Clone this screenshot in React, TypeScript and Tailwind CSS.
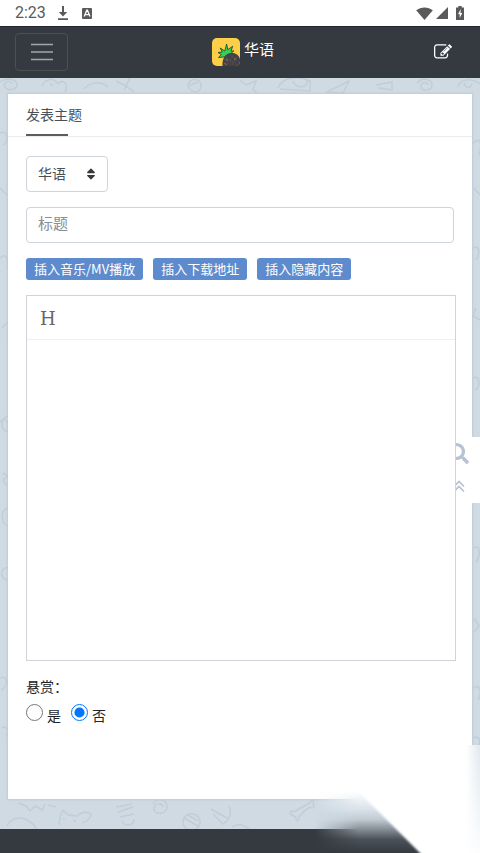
import React from 'react';
import { FaSearch, FaSort } from 'react-icons/fa';

interface InsertItem {
  key: string;
  label: string;
}

const insertItems: InsertItem[] = [
  { key: 'media', label: '插入音乐/MV播放' },
  { key: 'download', label: '插入下载地址' },
  { key: 'hidden', label: '插入隐藏内容' },
];

const StatusBar: React.FC = () => {
  return (
    <div className="flex h-[26px] items-center justify-between bg-white pl-[15px] pr-4 text-[#5a5a5a]">
      <div className="flex items-center">
        <span className="w-[42px] text-base leading-6">2:23</span>
        <svg width="12" height="14" viewBox="0 0 12 14" fill="currentColor">
          <path d="M5 0h2v6h3.2L6 10.5 1.8 6H5zM1 12.3h10V14H1z" />
        </svg>
        <svg className="ml-[13px]" width="10" height="11" viewBox="0 0 10 11">
          <rect width="10" height="11" rx="1" fill="currentColor" />
          <path d="M2.2 8.6 4.8 2.2h.6L8 8.6M3.2 6.6h3.8" fill="none" stroke="#fff" strokeWidth="1.3" />
        </svg>
      </div>
      <div className="flex items-center">
        <svg width="17" height="13" viewBox="0 0 18 14" fill="currentColor">
          <path d="M0 3.6C5 -.6 13 -.6 18 3.6L9 14z" />
        </svg>
        <svg className="ml-[3px]" width="12" height="12" viewBox="0 0 13 13" fill="currentColor">
          <path d="M13 0v13H0z" />
        </svg>
        <svg className="ml-2" width="8" height="14" viewBox="0 0 8 14">
          <path d="M2.3 0h3.4v1.4H8V14H0V1.4h2.3z" fill="currentColor" />
          <path d="M4.8 3 2 8.2h1.7V12l2.6-5H4.5z" fill="#fff" />
        </svg>
      </div>
    </div>
  );
};

const Logo: React.FC = () => {
  return (
    <svg width="28" height="28" viewBox="0 0 28 28">
      <rect width="28" height="28" rx="5" fill="#fdcf48" />
      <path
        d="M12 19 6.500 19.500l2.700-3L6 14.500l4.200-.5-2-4 4.600 3L14.600 6l1.200 5.700 4.900-3.500-1.700 5 2.900-.4-3.800 3.500z"
        fill="#35d05a"
        stroke="#1d4020"
        strokeWidth=".8"
      />
      <path d="M10.500 28C10 20 14 14.500 20 15c4 0 7.500 2.500 8 6.500v2c-.5 2.700-2 4.500-5 4.500z" fill="#434145" />
      <path d="M12.500 22.500l3-5M15.500 26l6-9.500M20 27l5-8M14 19l8 6M18 16.500l7 6" stroke="#5b585a" strokeWidth=".6" />
      <path d="M14 21.500l2 .8M22 21.500l1.500-1M12.500 25.500l2 1" stroke="#b9793e" strokeWidth="1" />
    </svg>
  );
};

const Navbar: React.FC = () => {
  return (
    <nav className="grid h-[52px] grid-cols-[1fr_auto_1fr] items-center border-t border-[#24282d] bg-[#343a40] px-[15px] pb-[2px]">
      <button
        type="button"
        aria-label="菜单"
        className="flex h-[38px] w-[53px] items-center justify-center rounded border border-[#4b5053]"
      >
        <svg width="24" height="18" viewBox="0 0 24 18" stroke="#a3a6a9" strokeWidth="1.7">
          <path d="M1 1.500h22M1 9h22M1 16.500h22" />
        </svg>
      </button>
      <a href="#" className="flex items-center gap-1 pl-[6px] text-[15px] leading-5 text-white">
        <Logo />
        <span className="pb-1">华语</span>
      </a>
      <a href="#" aria-label="发帖" className="mr-[13px] justify-self-end text-white">
        <svg width="18" height="18" viewBox="0 0 1792 1792" fill="currentColor">
          <path d="M888 1184l116-116-152-152-116 116v56h96v96h56zm440-720q-16-16-33 1l-350 350q-17 17-1 33t33-1l350-350q17-17 1-33zm80 594v190q0 119-84.5 203.5t-203.5 84.5h-832q-119 0-203.5-84.5t-84.5-203.5v-832q0-119 84.5-203.5t203.5-84.5h832q63 0 117 25 15 7 18 23 3 17-9 29l-49 49q-14 14-32 8-23-6-45-6h-832q-66 0-113 47t-47 113v832q0 66 47 113t113 47h832q66 0 113-47t47-113v-126q0-13 9-22l64-64q15-15 35-7t20 29zm-96-738l288 288-672 672h-288v-288zm444 132l-92 92-288-288 92-92q28-28 68-28t68 28l152 152q28 28 28 68t-28 68z" />
        </svg>
      </a>
    </nav>
  );
};

// Faint doodle wallpaper behind the card
const Doodles: React.FC = () => {
  return (
    <svg className="absolute inset-0 h-full w-full" fill="none" stroke="#c2cdd7" strokeWidth="1.5">
      <path d="M0 4c6-5 16-3 17 2s-9 8-12 3 5-8 7-3M42 8c2-7 12-9 16-2 5-6 11 0 7 8M50 5l3 3M84 11c8-9 18-7 24-2M116 3l10 5 8 6M130 0l-6 12M188 8c0-9 14-8 13 0s-9 8-13 0l10-4M240 2l6 5 10-4-3 8 5 6M278 10c3-9 18-14 32-7v10l-30-2M293 3c2 8 16 8 14-1M327 14l22-11-6 12zM376 7l16-3v8l-14-2M417 5c5-6 15-4 15 2s-10 7-11 2 6-6 7-2M458 9c2-9 14-9 22-3M464 5c2 6 6 6 8 1" />
      <path d="M0 344c5-6 9 0 8 8M8 338c-8 2-8 14 0 16M3 395l5 3-5 4 4 6M8 430c-8 2-7 16 0 18M8 490c-7-2-9 10-1 12M0 55c8-4 9 9 3 12M0 110l8 8M0 180c7-7 9 3 7 11M2 250l6-6v18M0 600c9-4 8 9 1 12M2 650c5-3 8 4 4 8" />
      <svg x="100%" overflow="visible">
        <path d="M-7 65c8-8 9 3 6 12M-6 110l6 7M-7 170c7-4 7 7 3 12M-4 230l-3 8 7 4M-7 300c7-4 8 9 2 12M-6 470c6-4 7 8 2 14M-6 540l5 8-5 6M-6 610c6-6 8 6 4 12M-7 660c9-4 8 8 2 10" />
      </svg>
      <svg y="100%" overflow="visible">
        <path d="M7-33c4-8 13-10 20-6s8 6 9 9M18-56l8 3 4 5 5-5 7 4 3-6M48-54l8 2M59-34c0-7 2-11 4-15l5 5 9 1c4-4 9-5 14-2-1 6-5 8-9 9M63-40h2M73-38h3M116-52l16-3M118-47l15-5M120-42l14-3M122-38c2 6 12 5 12-2M153-55c4-7 14-5 14 3s-13 8-13 2 8-7 9-2M183-37c0-11 17-11 17 0s-17 10-17 0M184-41l14 8M188-44l10 6M213-45l10 10c7-4 9-12 6-18M211-50l16 9M232-32c6-4 13-2 17 2M293-43c-5-3-2-7 1-4 6-4 12-7 16-9 1-4 5-3 3 1 3 2 0 5-3 3-5 3-8 6-11 10 0 5-4 5-3 0-2-1-3-1-3-1" transform="translate(0 30)" />
      </svg>
    </svg>
  );
};

const SideTools: React.FC = () => {
  return (
    <div className="absolute right-0 top-[359px] flex h-[66px] w-6 flex-col items-start overflow-hidden bg-white text-[#b7c3d1]">
      <button type="button" aria-label="搜索" className="-ml-2 flex h-[33px] items-center">
        <FaSearch size={21} />
      </button>
      <button type="button" aria-label="返回顶部" className="-ml-1 flex h-[33px] items-center">
        <svg width="14" height="14" viewBox="0 0 14 14" fill="none" stroke="currentColor" strokeWidth="1.7">
          <path d="M2 6.500 7 1.500l5 5M2 11.500l5-5 5 5" />
        </svg>
      </button>
    </div>
  );
};

// Page curl in the bottom right corner
const Corner: React.FC = () => {
  return (
    <svg className="pointer-events-none absolute bottom-0 right-0" width="166" height="110" viewBox="0 0 166 110">
      <defs>
        <linearGradient id="edge" x1="0" x2="1" y1="0" y2="0">
          <stop offset="0" stopColor="#fff" />
          <stop offset="1" stopColor="#dfe8ef" />
        </linearGradient>
        <linearGradient id="fade" x1="0" x2="0" y1="0" y2="1">
          <stop offset="0" stopColor="#fff" stopOpacity="0" />
          <stop offset="1" stopColor="#fff" stopOpacity=".9" />
        </linearGradient>
        <linearGradient id="haze" x1="0" x2="0" y1="48" y2="110" gradientUnits="userSpaceOnUse">
          <stop offset="0" stopColor="#fff" />
          <stop offset=".3" stopColor="#d9e2e9" />
          <stop offset=".46" stopColor="#c0cad3" />
          <stop offset=".62" stopColor="#858d95" />
          <stop offset=".78" stopColor="#4b5158" />
          <stop offset="1" stopColor="#343a40" />
        </linearGradient>
        <linearGradient id="spread" x1="1" x2="44" y1="0" y2="0" gradientUnits="userSpaceOnUse">
          <stop offset="0" stopColor="#000" />
          <stop offset="1" stopColor="#fff" />
        </linearGradient>
        <mask id="spreadMask" maskUnits="userSpaceOnUse" x="0" y="40" width="166" height="70">
          <path d="M0 40h166v70H0z" fill="url(#spread)" />
        </mask>
        <filter id="rim" x="-10%" y="-10%" width="120%" height="120%">
          <feGaussianBlur stdDeviation="1" />
        </filter>
      </defs>
      <path d="M0 48h120v62H0z" fill="url(#haze)" mask="url(#spreadMask)" />
      <path d="M36 40 110 114h70V40z" fill="#fff" filter="url(#rim)" />
      <path d="M152 2h14v108h-14z" fill="#fff" />
      <path d="M152 2h14v108h-14z" fill="url(#edge)" />
      <path d="M152 2h14v108h-14z" fill="url(#fade)" />
    </svg>
  );
};

const PostForm: React.FC = () => {
  return (
    <form className="relative flex flex-1 flex-col bg-white text-sm text-[#343a40] shadow-[0_0_2px_1px_#becbd6]">
      <header className="flex h-[43px] border-b border-[#ebedef] px-[18px]">
        <h1 className="relative pt-[10px] leading-[22px] text-[#495057]">
          发表主题
          <span className="absolute bottom-0 left-0 h-[2px] w-[42px] bg-[#5b5d61]" />
        </h1>
      </header>
      <div className="flex flex-1 flex-col pl-[18px] pr-4 pt-[19px]">
        <div className="relative w-[82px]">
          <select
            aria-label="版块"
            className="h-9 w-full appearance-none rounded border border-[#ced4da] bg-white pl-[11px] text-sm text-[#495057]"
          >
            <option>华语</option>
          </select>
          <FaSort className="pointer-events-none absolute right-[10px] top-[11px] text-[#343a40]" size={14} />
        </div>
        <input
          type="text"
          aria-label="标题"
          placeholder="标题"
          className="mr-[2px] mt-[15px] h-9 rounded border border-[#ced4da] px-[11px] pb-[2px] text-[15px] placeholder:text-[#868e96]"
        />
        <div className="mt-[15px] flex gap-[10px]">
          {insertItems.map((item) => (
            <button
              key={item.key}
              type="button"
              className="h-[22px] whitespace-nowrap rounded-[3px] bg-[#5d8bcd] px-2 font-['Noto_Sans_CJK_SC',sans-serif] text-[13px] leading-5 text-white"
            >
              {item.label}
            </button>
          ))}
        </div>
        {/* Editor */}
        <div className="relative z-10 mt-[15px] flex flex-1 flex-col border border-[#cfd4da] bg-white">
          <div className="flex h-11 items-center border-b border-[#eeeff1] px-[13px] pt-[2px]">
            <button type="button" className="font-['DejaVu_Serif',serif] text-lg leading-6 text-[#666]">
              H
            </button>
          </div>
          <textarea aria-label="内容" className="w-full flex-1 resize-none outline-none" />
        </div>
        <div role="radiogroup" aria-labelledby="reward" className="mb-[68px] mt-[14px] text-[#212529]">
          <p id="reward" className="leading-6">悬赏：</p>
          <div className="mt-[2px] flex gap-[10px]">
            <label className="flex items-center gap-1">
              <input type="radio" name="reward" className="mb-2 h-[17px] w-[17px]" />
              <span className="leading-[30px]">是</span>
            </label>
            <label className="flex items-center gap-1">
              <input type="radio" name="reward" defaultChecked className="mb-2 h-[17px] w-[17px] accent-[#0075ff]" />
              <span className="leading-[30px]">否</span>
            </label>
          </div>
        </div>
      </div>
    </form>
  );
};

const App: React.FC = () => {
  return (
    <div
      lang="zh-CN"
      className="relative flex min-h-screen flex-col font-['Roboto','Noto_Sans_CJK_SC',sans-serif]"
    >
      <StatusBar />
      <Navbar />
      <main className="relative flex flex-1 flex-col bg-[#cfdae3] px-2 pb-[30px] pt-4">
        <Doodles />
        <PostForm />
        <SideTools />
      </main>
      <footer className="h-6 bg-[#343a40]" />
      <Corner />
    </div>
  );
};

export default App;
